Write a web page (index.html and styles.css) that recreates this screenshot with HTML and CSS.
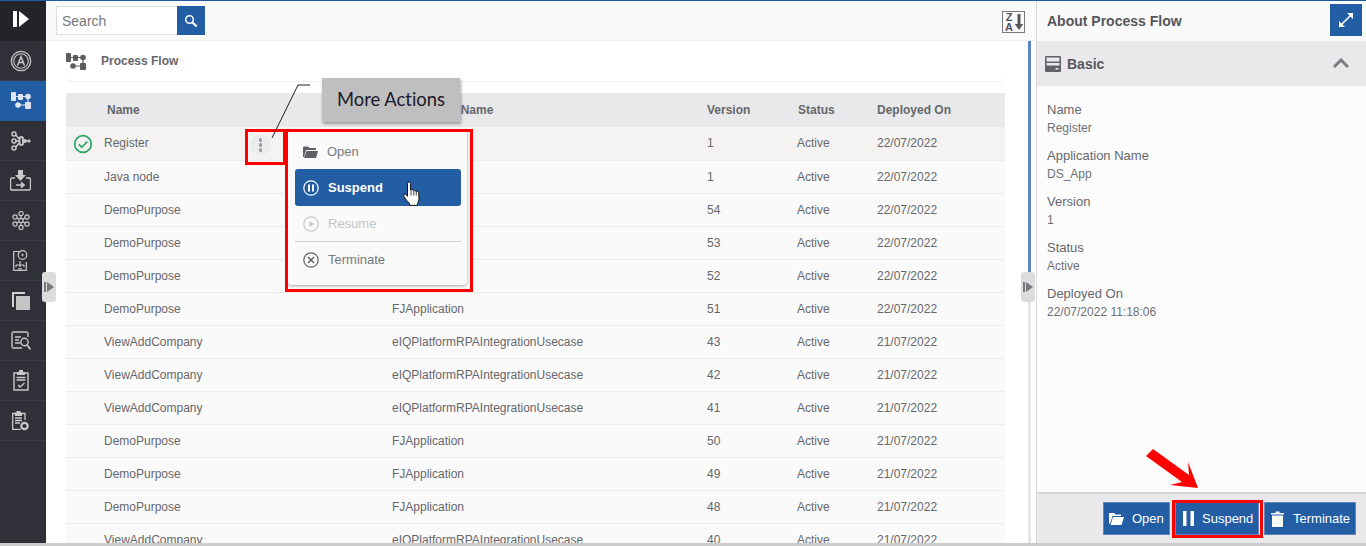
FILE: index.html
```html
<!DOCTYPE html>
<html lang="en">
<head>
    <meta charset="UTF-8">
    <meta name="viewport" content="width=device-width, initial-scale=1.0">
    <title>Process Flow</title>
    <link rel="stylesheet" href="styles.css">
</head>
<body>
    <svg class="icon-defs" width="0" height="0">
        <symbol id="icon-flow" viewBox="0 0 20 17">
            <rect x="0" y="0" width="5" height="9" rx="1"/>
            <rect x="7" y="2" width="5" height="6" rx="1"/>
            <circle cx="17" cy="4.5" r="2.8"/>
            <path d="M4 4.5h4M11 4.5h4M17 6v5M7 13h7" stroke="currentColor" stroke-width="1.2" fill="none"/>
            <circle cx="7" cy="13" r="2.8"/>
            <rect x="14" y="10" width="6" height="7" rx="1"/>
        </symbol>
    </svg>

    <div class="app">
        <nav class="sidebar">
            <div class="side-logo">
                <svg width="16" height="16" viewBox="0 0 16 16"><rect x="0" y="0" width="4" height="16" fill="#fff"/><path d="M6 0l10 8-10 8z" fill="#fff"/></svg>
            </div>
            <a class="side-item">
                <svg width="22" height="22" viewBox="0 0 22 22" fill="none" stroke="currentColor"><circle cx="11" cy="11" r="9.7" stroke-width="1.3"/><circle cx="11" cy="11" r="7.3" stroke-width="1.1"/><path d="M7.5 15.5L11 6.5l3.5 9M8.8 12.5h4.4" stroke-width="1.5"/></svg>
            </a>
            <a class="side-item active">
                <svg class="flow" width="20" height="17"><use href="#icon-flow"/></svg>
            </a>
            <a class="side-item">
                <svg width="20" height="20" viewBox="0 0 20 20" fill="none" stroke="currentColor" stroke-width="1.5"><circle cx="3" cy="3" r="2"/><circle cx="3" cy="10" r="2"/><circle cx="3" cy="17" r="2"/><path d="M5 4l3 4M5 10h3M5 16l3-4"/><rect x="8.500" y="6" width="3.500" height="8" rx="1.700" stroke-width="1.800"/><circle cx="14" cy="10" r="1.200" fill="currentColor"/><path d="M15 10h4M17.500 8.500l1.500 1.500-1.500 1.500"/></svg>
            </a>
            <a class="side-item">
                <svg width="21" height="21" viewBox="0 0 21 21" fill="none" stroke="currentColor"><path d="M8 0h5v5h3l-5.500 6L5 5h3z" fill="currentColor" stroke="none"/><path d="M5 8H2a1.500 1.500 0 0 0-1.500 1.500v9A1.500 1.500 0 0 0 2 20h17a1.500 1.500 0 0 0 1.500-1.500v-9A1.500 1.500 0 0 0 19 8h-3" stroke-width="1.400"/><path d="M6 15h7M11 12.500l3 2.500-3 2.500" stroke-width="1.700"/></svg>
            </a>
            <a class="side-item">
                <svg width="18" height="19" viewBox="0 0 18 19" fill="none" stroke="currentColor" stroke-width="1.200"><circle cx="9" cy="9.500" r="2.200"/><circle cx="9" cy="2.600" r="2.100"/><circle cx="9" cy="16.400" r="2.100"/><circle cx="3" cy="6" r="2.100"/><circle cx="15" cy="6" r="2.100"/><circle cx="3" cy="13" r="2.100"/><circle cx="15" cy="13" r="2.100"/><path d="M9 4.700v2.600M9 11.700v2.600M5 7l2 1.300M13 7l-2 1.300M5 12l2-1.300M13 12l-2-1.300"/></svg>
            </a>
            <a class="side-item">
                <svg width="15" height="21" viewBox="0 0 15 21" fill="none" stroke="currentColor" stroke-width="1.200"><path d="M6 1.500H.7v18.800h12.600V12"/><circle cx="9.500" cy="5" r="4.300"/><path d="M8 5h3M9.500 3.500v3" stroke-width=".8"/><path d="M3 15h8M7 11v4M3 15v2M7 15v2M11 15v2"/><path d="M5 18.800h4"/></svg>
            </a>
            <a class="side-item">
                <svg width="18" height="18" viewBox="0 0 18 18"><path d="M0 0h13v2H2v13H0z" fill="#d2d2d2"/><rect x="4" y="4" width="14" height="14" fill="#c4c4c4"/></svg>
            </a>
            <a class="side-item">
                <svg width="20" height="20" viewBox="0 0 20 20" fill="none" stroke="currentColor" stroke-width="1.400"><path d="M17 6V2.500A1.500 1.500 0 0 0 15.500 1h-13A1.500 1.500 0 0 0 1 2.500v13A1.500 1.500 0 0 0 2.500 17H11"/><path d="M4 6h6M4 9h4M4 12h5"/><circle cx="13.500" cy="11" r="3.700"/><path d="M16 14l3.500 4.500" stroke-width="1.800"/></svg>
            </a>
            <a class="side-item">
                <svg width="16" height="21" viewBox="0 0 16 21" fill="none" stroke="currentColor"><path d="M5 3H1v17h14V3h-4" stroke-width="1.400"/><path d="M6 0h4v2h2v3H4V2h2z" fill="currentColor" stroke="none"/><path d="M3.500 7.500h9M3.500 10h9" stroke-width="1.500"/><path d="M5 15l2 2 4.500-4" stroke-width="1.400"/></svg>
            </a>
            <a class="side-item">
                <svg width="17" height="20" viewBox="0 0 17 20" fill="none" stroke="currentColor"><path d="M4 2.500H.7v15.800h8M10 2.500h3V9" stroke-width="1.300"/><path d="M4.500 0h4v1.500H10V5H3V1.500h1.500z" fill="currentColor" stroke="none"/><path d="M3 7h7M3 9.500h7M3 12h5" stroke-width="1.300"/><circle cx="12.500" cy="15" r="3.200" stroke-width="2.200"/></svg>
            </a>
        </nav>

        <main class="main">
            <div class="toolbar">
                <div class="search">
                    <input class="search-input" type="text" placeholder="Search">
                    <button class="search-btn">
                        <svg width="14" height="14" viewBox="0 0 14 14" fill="none" stroke="#fff"><circle cx="5.500" cy="5.500" r="3.800" stroke-width="1.500"/><path d="M8.500 8.500l4.200 4" stroke-width="2.200"/></svg>
                    </button>
                </div>
                <div class="sort-btn">
                    <svg width="23" height="22" viewBox="0 0 23 22"><rect x=".5" y=".5" width="22" height="21" fill="#fafafa" stroke="#77787c"/><text x="7" y="10" class="sort-text">Z</text><text x="7" y="20" class="sort-text">A</text><path d="M15.500 3h3v10h2.700l-4.200 6-4.200-6h2.700z" fill="#55565a"/></svg>
                </div>
            </div>

            <div class="content">
                <div class="list-area">
                    <div class="page-head">
                        <svg class="flow" width="20" height="17"><use href="#icon-flow"/></svg>
                        <span class="page-title">Process Flow</span>
                    </div>
                    <table class="flow-table">
                        <colgroup>
                            <col class="col-state"><col class="col-name"><col class="col-app"><col class="col-ver"><col class="col-status"><col class="col-date">
                        </colgroup>
                        <thead>
                            <tr>
                                <th></th>
                                <th class="th-name">Name</th>
                                <th>Application Name</th>
                                <th>Version</th>
                                <th class="th-status">Status</th>
                                <th>Deployed On</th>
                            </tr>
                        </thead>
                        <tbody>
                            <tr class="selected">
                                <td class="state">
                                    <svg width="20" height="20" viewBox="0 0 20 20" fill="none" stroke="#27a567"><circle cx="10" cy="10" r="8.300" stroke-width="1.700"/><path d="M5.800 10.300l3 3 5.500-5.800" stroke-width="1.800"/></svg>
                                </td>
                                <td>
                                    <div class="name-wrap">
                                        <span>Register</span>
                                        <span class="kebab"><i></i><i></i><i></i></span>
                                    </div>
                                </td>
                                <td>DS_App</td><td>1</td><td>Active</td><td>22/07/2022</td>
                            </tr>
                            <tr><td></td><td>Java node</td><td>DS_App</td><td>1</td><td>Active</td><td>22/07/2022</td></tr>
                            <tr><td></td><td>DemoPurpose</td><td>FJApplication</td><td>54</td><td>Active</td><td>22/07/2022</td></tr>
                            <tr><td></td><td>DemoPurpose</td><td>FJApplication</td><td>53</td><td>Active</td><td>22/07/2022</td></tr>
                            <tr><td></td><td>DemoPurpose</td><td>FJApplication</td><td>52</td><td>Active</td><td>22/07/2022</td></tr>
                            <tr><td></td><td>DemoPurpose</td><td>FJApplication</td><td>51</td><td>Active</td><td>22/07/2022</td></tr>
                            <tr><td></td><td>ViewAddCompany</td><td>eIQPlatformRPAIntegrationUsecase</td><td>43</td><td>Active</td><td>21/07/2022</td></tr>
                            <tr><td></td><td>ViewAddCompany</td><td>eIQPlatformRPAIntegrationUsecase</td><td>42</td><td>Active</td><td>21/07/2022</td></tr>
                            <tr><td></td><td>ViewAddCompany</td><td>eIQPlatformRPAIntegrationUsecase</td><td>41</td><td>Active</td><td>21/07/2022</td></tr>
                            <tr><td></td><td>DemoPurpose</td><td>FJApplication</td><td>50</td><td>Active</td><td>21/07/2022</td></tr>
                            <tr><td></td><td>DemoPurpose</td><td>FJApplication</td><td>49</td><td>Active</td><td>21/07/2022</td></tr>
                            <tr><td></td><td>DemoPurpose</td><td>FJApplication</td><td>48</td><td>Active</td><td>21/07/2022</td></tr>
                            <tr><td></td><td>ViewAddCompany</td><td>eIQPlatformRPAIntegrationUsecase</td><td>40</td><td>Active</td><td>21/07/2022</td></tr>
                        </tbody>
                    </table>
                </div>
                <div class="scroll-track"><div class="scroll-thumb"></div></div>
            </div>
        </main>

        <aside class="panel">
            <div class="panel-head">
                <span class="panel-title">About Process Flow</span>
                <button class="expand-btn">
                    <svg width="16" height="16" viewBox="0 0 16 16" fill="none" stroke="#fff"><path d="M2.500 13.500l11-11" stroke-width="1.600"/><path d="M9 1h6v6zM1 9v6h6z" fill="#fff" stroke="none"/></svg>
                </button>
            </div>
            <div class="section-head">
                <svg width="16" height="16" viewBox="0 0 16 16"><path d="M0 1a1 1 0 0 1 1-1h14a1 1 0 0 1 1 1v14a1 1 0 0 1-1 1H1a1 1 0 0 1-1-1zM1.500 1.500v4h13v-4zm0 5.500v2.500h13V7zm9 5v1.500h3V12z" fill="#616266" fill-rule="evenodd"/></svg>
                <span class="section-title">Basic</span>
                <svg class="chevron" width="16" height="10" viewBox="0 0 16 10" fill="none" stroke="#7c7d80" stroke-width="3"><path d="M1 9l7-7 7 7"/></svg>
            </div>
            <div class="details">
                <div class="field"><div class="field-label">Name</div><div class="field-value">Register</div></div>
                <div class="field"><div class="field-label">Application Name</div><div class="field-value">DS_App</div></div>
                <div class="field"><div class="field-label">Version</div><div class="field-value">1</div></div>
                <div class="field"><div class="field-label">Status</div><div class="field-value">Active</div></div>
                <div class="field"><div class="field-label">Deployed On</div><div class="field-value">22/07/2022 11:18:06</div></div>
            </div>
            <div class="panel-foot">
                <button class="action-btn btn-open">
                    <svg width="15" height="13" viewBox="0 0 15 13"><path d="M0 1h5l1.500 1.500H12V4H3.500L1.300 11 0 12z" fill="#fff"/><path d="M4 5h11l-2.500 8H1.500z" fill="#fff"/></svg>
                    Open
                </button>
                <button class="action-btn btn-suspend">
                    <svg width="11" height="15" viewBox="0 0 11 15"><rect width="3.500" height="15" fill="#fff"/><rect x="7.500" width="3.500" height="15" fill="#fff"/></svg>
                    Suspend
                </button>
                <button class="action-btn btn-terminate">
                    <svg width="13" height="16" viewBox="0 0 13 16"><path d="M0 2h4.500V.5h4V2H13v1.500H0zM1 4.500h11V16H1z" fill="#fff"/></svg>
                    Terminate
                </button>
            </div>
        </aside>
    </div>
    <div class="bottom-bar"></div>

    <!-- splitter handles -->
    <div class="handle handle-left"><svg width="10" height="10" viewBox="0 0 10 10"><rect width="2" height="10" fill="#77787c"/><path d="M3 0l7 5-7 5z" fill="#77787c"/></svg></div>
    <div class="handle handle-right"><svg width="10" height="10" viewBox="0 0 10 10"><rect width="2" height="10" fill="#77787c"/><path d="M3 0l7 5-7 5z" fill="#77787c"/></svg></div>

    <!-- row actions menu -->
    <div class="menu">
        <div class="menu-item">
            <svg width="15" height="12" viewBox="0 0 15 12"><path d="M0 1.500A1 1 0 0 1 1 .5h4l1.500 1.500H13V4H3L1 11H0z" fill="#5f6064"/><path d="M3.500 5H15l-2 7H1z" fill="#5f6064"/></svg>
            Open
        </div>
        <div class="menu-item hot">
            <svg width="16" height="16" viewBox="0 0 16 16" fill="none" stroke="#fff"><circle cx="8" cy="8" r="7.200" stroke-width="1.200"/><path d="M6 4.500v7M10 4.500v7" stroke-width="2"/></svg>
            Suspend
        </div>
        <div class="menu-item off">
            <svg width="16" height="16" viewBox="0 0 16 16" fill="none" stroke="#c8c8c8"><circle cx="8" cy="8" r="7.200" stroke-width="1.200"/><path d="M6.300 5l5 3-5 3z" fill="#c8c8c8" stroke="none"/></svg>
            Resume
        </div>
        <div class="menu-line"></div>
        <div class="menu-item">
            <svg width="16" height="16" viewBox="0 0 16 16" fill="none" stroke="#5f6064"><circle cx="8" cy="8" r="7.200" stroke-width="1.200"/><path d="M5 5l6 6M11 5l-6 6" stroke-width="1.500"/></svg>
            Terminate
        </div>
    </div>

    <!-- annotations on the screenshot -->
    <div class="mark mark-kebab"></div>
    <div class="mark mark-menu"></div>
    <div class="mark mark-suspend"></div>
    <div class="callout">More Actions</div>
    <svg class="callout-line" width="60" height="70" viewBox="0 0 60 70" fill="none"><path d="M2 63L28 10h12" stroke="#222" stroke-width="1"/></svg>
    <svg class="hand" width="18" height="26" viewBox="0 0 18 26"><path d="M5 1.500c1-1 2.500-.5 2.500 1v6.500l1-.3c.8-.2 1.500.2 1.800.8l.7-.1c.9-.2 1.500.3 1.800 1l.7-.1c1.200-.1 2 .7 2.200 1.800l.3 5.500c0 2-.6 3.300-1.500 4.800v2H6.500v-2C4.500 20.500 2 17.500.8 15c-.5-1.200.8-2.400 2-1.500l1.700 1.700V2.500z" fill="#fff" stroke="#111" stroke-width="1"/><path d="M8 9.500v5M10.800 10v4.500M13.300 11v3.500" stroke="#111" stroke-width=".8"/></svg>
    <svg class="arrow" width="54" height="42" viewBox="0 0 54 42"><path d="M7 0L43 26 42 13 52 39 24 36 36 33 0 7z" fill="#fe0000"/></svg>
</body>
</html>
```

FILE: styles.css
```css
* {
    box-sizing: border-box;
}

html, body {
    margin: 0;
    padding: 0;
    height: 100%;
    overflow: hidden;
}

body {
    font-family: "Liberation Sans", Arial, sans-serif;
    font-size: 12px;
    color: #66676b;
    background-color: #fff;
    position: relative;
}

button {
    font-family: inherit;
    border: none;
    padding: 0;
    cursor: pointer;
}

.icon-defs {
    display: block;
    position: absolute;
}

.flow {
    fill: currentColor;
}

.app {
    display: flex;
    height: 543px;
    border-top: 1px solid #1f5ca3;
    overflow: hidden;
}

.bottom-bar {
    height: 3px;
    background-color: #cbcbcb;
}

/* Sidebar */
.sidebar {
    width: 46px;
    flex-shrink: 0;
    background-color: #2f3038;
}

.side-logo {
    height: 40px;
    background-color: #232328;
    display: flex;
    align-items: center;
    padding-left: 13px;
    padding-bottom: 5px;
}

.side-item {
    height: 40px;
    display: flex;
    align-items: center;
    justify-content: center;
    padding-right: 5px;
    color: #c9c9c9;
    border-bottom: 1px solid #3b3c44;
}

.side-item.active {
    background-color: #235da4;
    color: #dfe6f0;
    border-bottom-color: #235da4;
}

/* Main area */
.main {
    width: 991px;
    flex-shrink: 0;
    display: flex;
    flex-direction: column;
    border-right: 1px solid #d9d9d9;
}

.toolbar {
    height: 40px;
    flex-shrink: 0;
    display: flex;
    align-items: center;
    justify-content: space-between;
    padding: 0 9px 0 10px;
    background-color: #fafafa;
    border-bottom: 1px solid #efefef;
}

.search {
    display: flex;
    height: 29px;
}

.search-input {
    width: 121px;
    height: 29px;
    border: 1px solid #dedede;
    border-right: none;
    padding: 0 5px;
    font-family: inherit;
    font-size: 14px;
    background-color: #fff;
    outline: none;
}

.search-input::placeholder {
    color: #77787c;
    opacity: 1;
}

.search-btn {
    width: 28px;
    height: 29px;
    background-color: #235da4;
    display: flex;
    align-items: center;
    justify-content: center;
}

.sort-btn {
    height: 22px;
    margin-right: 2px;
    margin-top: 3px;
}

.sort-text {
    font-size: 11px;
    font-weight: bold;
    fill: #55565a;
    text-anchor: middle;
}

.content {
    flex: 1;
    display: flex;
    min-height: 0;
}

.list-area {
    width: 982px;
    flex-shrink: 0;
    padding-left: 20px;
    padding-right: 23px;
    overflow: hidden;
}

.page-head {
    height: 41px;
    display: flex;
    align-items: center;
    gap: 15px;
    border-bottom: 1px solid #efefef;
    border-radius: 0 0 6px 6px;
    color: #5c5d61;
    margin-bottom: 11px;
}

.page-title {
    font-size: 12px;
    font-weight: 700;
    color: #66676b;
}

/* Table */
.flow-table {
    width: 939px;
    table-layout: fixed;
    border-collapse: collapse;
}

.col-state { width: 38px; }
.col-name { width: 288px; }
.col-app { width: 315px; }
.col-ver { width: 90px; }
.col-status { width: 80px; }
.col-date { width: 128px; }

.flow-table th {
    height: 34px;
    background-color: #e9e9eb;
    text-align: left;
    font-weight: 700;
    color: #66676b;
    padding: 0;
}

.flow-table .th-name {
    padding-left: 3px;
}

.flow-table .th-status {
    padding-left: 1px;
}

.flow-table td {
    height: 33px;
    padding: 0;
    background-color: #fafafa;
    border-bottom: 1px solid #ececec;
    white-space: nowrap;
}

.flow-table tr.selected td {
    background-color: #f4f3f1;
}

.state {
    text-align: center;
}

.state svg {
    display: block;
    margin: 1px 0 0 7px;
}

.name-wrap {
    display: flex;
    align-items: center;
    justify-content: space-between;
    width: 170px;
}

.kebab {
    width: 21px;
    height: 21px;
    border-radius: 50%;
    background-color: #eaecee;
    display: flex;
    flex-direction: column;
    align-items: center;
    justify-content: center;
    gap: 1.500px;
    margin: 3px 3px 0 0;
}

.kebab i {
    width: 3.500px;
    height: 3.500px;
    border-radius: 50%;
    background-color: #98999c;
}

.scroll-track {
    width: 3px;
    background-color: #e6e6e6;
}

.scroll-thumb {
    height: 232px;
    background-color: #5a87c2;
}

/* Right panel */
.panel {
    flex: 1;
    display: flex;
    flex-direction: column;
    background-color: #fcfcfc;
    min-width: 0;
}

.panel-head {
    height: 40px;
    flex-shrink: 0;
    display: flex;
    align-items: center;
    justify-content: space-between;
    padding: 0 4px 0 10px;
    background-color: #fafafa;
}

.panel-title {
    font-size: 14px;
    font-weight: 700;
    color: #55565a;
}

.expand-btn {
    width: 32px;
    height: 32px;
    margin-bottom: 2px;
    background-color: #235da4;
    display: flex;
    align-items: center;
    justify-content: center;
}

.section-head {
    height: 45px;
    flex-shrink: 0;
    display: flex;
    align-items: center;
    padding: 0 4px 0 8px;
    gap: 6px;
    background-color: #e9e9eb;
}

.section-title {
    font-size: 14px;
    font-weight: 700;
    color: #55565a;
}

.chevron {
    margin-left: auto;
    margin-right: 13px;
    margin-top: -2px;
}

.details {
    flex: 1;
    padding: 14px 10px;
}

.field {
    margin-bottom: 8px;
}

.field-label {
    font-size: 13px;
    line-height: 19px;
    color: #66676b;
}

.field-value {
    font-size: 12px;
    line-height: 19px;
    color: #6f7074;
}

.panel-foot {
    height: 51px;
    flex-shrink: 0;
    display: flex;
    justify-content: flex-end;
    align-items: flex-start;
    gap: 5px;
    padding: 8px 10px 0 0;
    background-color: #e9e9eb;
    border-top: 2px solid #d5d5d5;
}

.action-btn {
    height: 33px;
    display: flex;
    align-items: center;
    color: #fff;
    font-size: 13px;
    background-color: #235da4;
    border: 1px solid #5e88bd;
}

.btn-open {
    width: 67px;
    gap: 8px;
    padding-left: 5px;
}

.btn-suspend {
    width: 84px;
    gap: 8px;
    padding-left: 7px;
}

.btn-terminate {
    width: 92px;
    gap: 9px;
    padding-left: 6px;
}

/* Splitter handles */
.handle {
    position: absolute;
    top: 272px;
    width: 14px;
    height: 30px;
    background-color: #dcdcdc;
    border-radius: 3px;
    display: flex;
    align-items: center;
    justify-content: center;
}

.handle-left {
    left: 42px;
}

.handle-right {
    left: 1021px;
}

/* Row menu */
.menu {
    position: absolute;
    left: 288px;
    top: 131px;
    width: 179px;
    height: 154px;
    padding: 3px 6px 0 7px;
    background-color: #fafafa;
    border-radius: 0 0 4px 4px;
    box-shadow: 0 1px 3px rgba(0, 0, 0, 0.35);
}

.menu-item {
    height: 35px;
    display: flex;
    align-items: center;
    gap: 9px;
    padding-left: 8px;
    font-size: 13px;
    color: #77787c;
}

.menu-item.hot {
    height: 37px;
    background-color: #235da4;
    border-radius: 3px;
    color: #fff;
    font-weight: 700;
    margin-bottom: 0;
}

.menu-item.off {
    color: #c4c4c4;
}

.menu-line {
    height: 1px;
    background-color: #cfcfcf;
}

/* Annotations */
.mark {
    position: absolute;
    border: 3px solid #fe0000;
}

.mark-kebab {
    left: 245px;
    top: 129px;
    width: 41px;
    height: 36px;
}

.mark-menu {
    left: 285px;
    top: 129px;
    width: 188px;
    height: 163px;
}

.mark-suspend {
    left: 1172px;
    top: 500px;
    width: 91px;
    height: 38px;
}

.callout {
    position: absolute;
    left: 322px;
    top: 78px;
    width: 138px;
    height: 44px;
    padding-bottom: 2px;
    background-color: #bfbfbf;
    box-shadow: 1px 2px 3px rgba(0, 0, 0, 0.35);
    color: #1a1a2a;
    font-family: Lato, "Open Sans", sans-serif;
    font-size: 18.400px;
    font-variant-ligatures: none;
    display: flex;
    align-items: center;
    justify-content: center;
}

.callout-line {
    position: absolute;
    left: 270px;
    top: 75px;
}

.hand {
    position: absolute;
    left: 403px;
    top: 181px;
}

.arrow {
    position: absolute;
    left: 1146px;
    top: 449px;
}
```
